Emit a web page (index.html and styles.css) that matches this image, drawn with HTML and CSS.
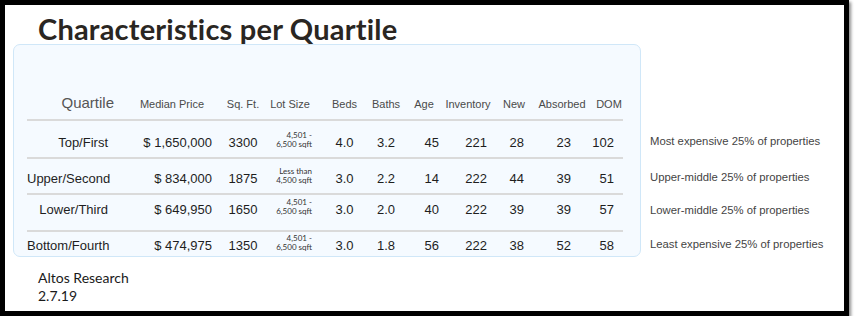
FILE: index.html
```html
<!DOCTYPE html>
<html lang="en">
<head>
  <meta charset="UTF-8">
  <title>Characteristics per Quartile</title>
  <link rel="stylesheet" href="styles.css">
</head>
<body>
<div class="frame">
  <h1 class="title">Characteristics per Quartile</h1>

  <div class="layout">
    <div class="panel">
      <div class="row head">
        <div class="quartile-head">Quartile</div>
        <div>Median Price</div>
        <div>Sq. Ft.</div>
        <div>Lot Size</div>
        <div>Beds</div>
        <div>Baths</div>
        <div>Age</div>
        <div>Inventory</div>
        <div>New</div>
        <div>Absorbed</div>
        <div>DOM</div>
      </div>

      <div class="row data r1">
        <div>Top/First</div>
        <div>$ 1,650,000</div>
        <div>3300</div>
        <div class="lot">4,501 -<br>6,500 sqft</div>
        <div>4.0</div>
        <div>3.2</div>
        <div>45</div>
        <div>221</div>
        <div>28</div>
        <div>23</div>
        <div>102</div>
      </div>

      <div class="row data r2">
        <div>Upper/Second</div>
        <div>$ 834,000</div>
        <div>1875</div>
        <div class="lot">Less than<br>4,500 sqft</div>
        <div>3.0</div>
        <div>2.2</div>
        <div>14</div>
        <div>222</div>
        <div>44</div>
        <div>39</div>
        <div>51</div>
      </div>

      <div class="row data r3">
        <div>Lower/Third</div>
        <div>$ 649,950</div>
        <div>1650</div>
        <div class="lot">4,501 -<br>6,500 sqft</div>
        <div>3.0</div>
        <div>2.0</div>
        <div>40</div>
        <div>222</div>
        <div>39</div>
        <div>39</div>
        <div>57</div>
      </div>

      <div class="row data r4">
        <div>Bottom/Fourth</div>
        <div>$ 474,975</div>
        <div>1350</div>
        <div class="lot">4,501 -<br>6,500 sqft</div>
        <div>3.0</div>
        <div>1.8</div>
        <div>56</div>
        <div>222</div>
        <div>38</div>
        <div>52</div>
        <div>58</div>
      </div>
    </div>

    <div class="notes">
      <div class="note r1">Most expensive 25% of properties</div>
      <div class="note r2">Upper-middle 25% of properties</div>
      <div class="note r3">Lower-middle 25% of properties</div>
      <div class="note r4">Least expensive 25% of properties</div>
    </div>
  </div>

  <div class="source">
    Altos Research<br>
    2.7.19
  </div>
</div>
</body>
</html>
```

FILE: styles.css
```css
body {
  margin: 0;
  background-color: #fff;
}
.frame {
  box-sizing: border-box;
  width: 849px;
  height: 316px;
  border: 5px solid #000;
  box-shadow: 2px 2px 3px rgba(0, 0, 0, 0.45);
  padding-left: 8px;
}
.title {
  margin: 0 0 0 25px;
  padding-top: 8px;
  height: 31px;
  font-family: Lato, sans-serif;
  font-weight: 700;
  font-size: 29px;
  line-height: 31px;
  letter-spacing: 0.2px;
  color: #2a2622;
}
.layout {
  display: flex;
  gap: 9px;
}
.panel {
  box-sizing: border-box;
  width: 628px;
  height: 213px;
  border: 1px solid #d0e7f8;
  border-radius: 7px;
  background-color: #f5faff;
  padding: 0 17px 0 13px;
}
.row {
  display: grid;
  grid-template-columns: 93px 104px 38px 56px 48px 40px 36px 52px 40px 56px 33px;
  align-items: last baseline;
  align-content: start;
  box-sizing: border-box;
}
.head {
  height: 76px;
  padding-top: 49px;
  border-bottom: 2px solid #dadada;
  font-family: "Liberation Sans", Arial, sans-serif;
  font-size: 11px;
  line-height: 14px;
  color: #4a4a4a;
  text-align: center;
}
.head .quartile-head {
  font-size: 15px;
  line-height: 17px;
  text-align: right;
  padding-right: 6px;
  color: #555;
}
.head div:nth-child(5) {
  padding-left: 5px;
}
.head div:nth-child(11) {
  padding-left: 5px;
}
.data {
  font-family: "Liberation Sans", Arial, sans-serif;
  font-size: 13px;
  line-height: 16px;
  color: #1e1e1e;
  text-align: right;
}
.data div:nth-child(1),
.data div:nth-child(2) {
  padding-right: 12px;
}
.data div:nth-child(3),
.data div:nth-child(6) {
  text-align: center;
}
.data div:nth-child(4) {
  padding-right: 6px;
}
.data div:nth-child(5) {
  text-align: center;
  padding-left: 5px;
}
.data div:nth-child(7) {
  padding-right: 3px;
}
.data div:nth-child(8) {
  padding-right: 7px;
}
.data div:nth-child(9) {
  padding-right: 10px;
}
.data div:nth-child(10) {
  padding-right: 19px;
}
.data div:nth-child(11) {
  padding-right: 9px;
}
.lot {
  font-family: Lato, sans-serif;
  font-size: 8px;
  line-height: 9px;
  color: #333;
}
.r1 {
  height: 38px;
  padding-top: 10px;
}
.r2 {
  height: 36px;
  padding-top: 8px;
}
.r3 {
  height: 37px;
  padding-top: 3px;
}
.r4 {
  height: 24px;
  padding-top: 2px;
}
.data.r1,
.data.r2,
.data.r3 {
  border-bottom: 2px solid #dadada;
}
.notes {
  padding-top: 77px;
  font-family: "Liberation Sans", Arial, sans-serif;
  font-size: 11.3px;
  line-height: 14px;
  color: #444;
}
.note {
  box-sizing: border-box;
}
.note.r1 {
  padding-top: 13px;
}
.note.r2 {
  padding-top: 11px;
}
.note.r3 {
  padding-top: 8px;
}
.note.r4 {
  padding-top: 5px;
}
.source {
  margin: 12px 0 0 25px;
  font-family: Lato, sans-serif;
  font-size: 14px;
  line-height: 18px;
  color: #1a1a1a;
}
```
